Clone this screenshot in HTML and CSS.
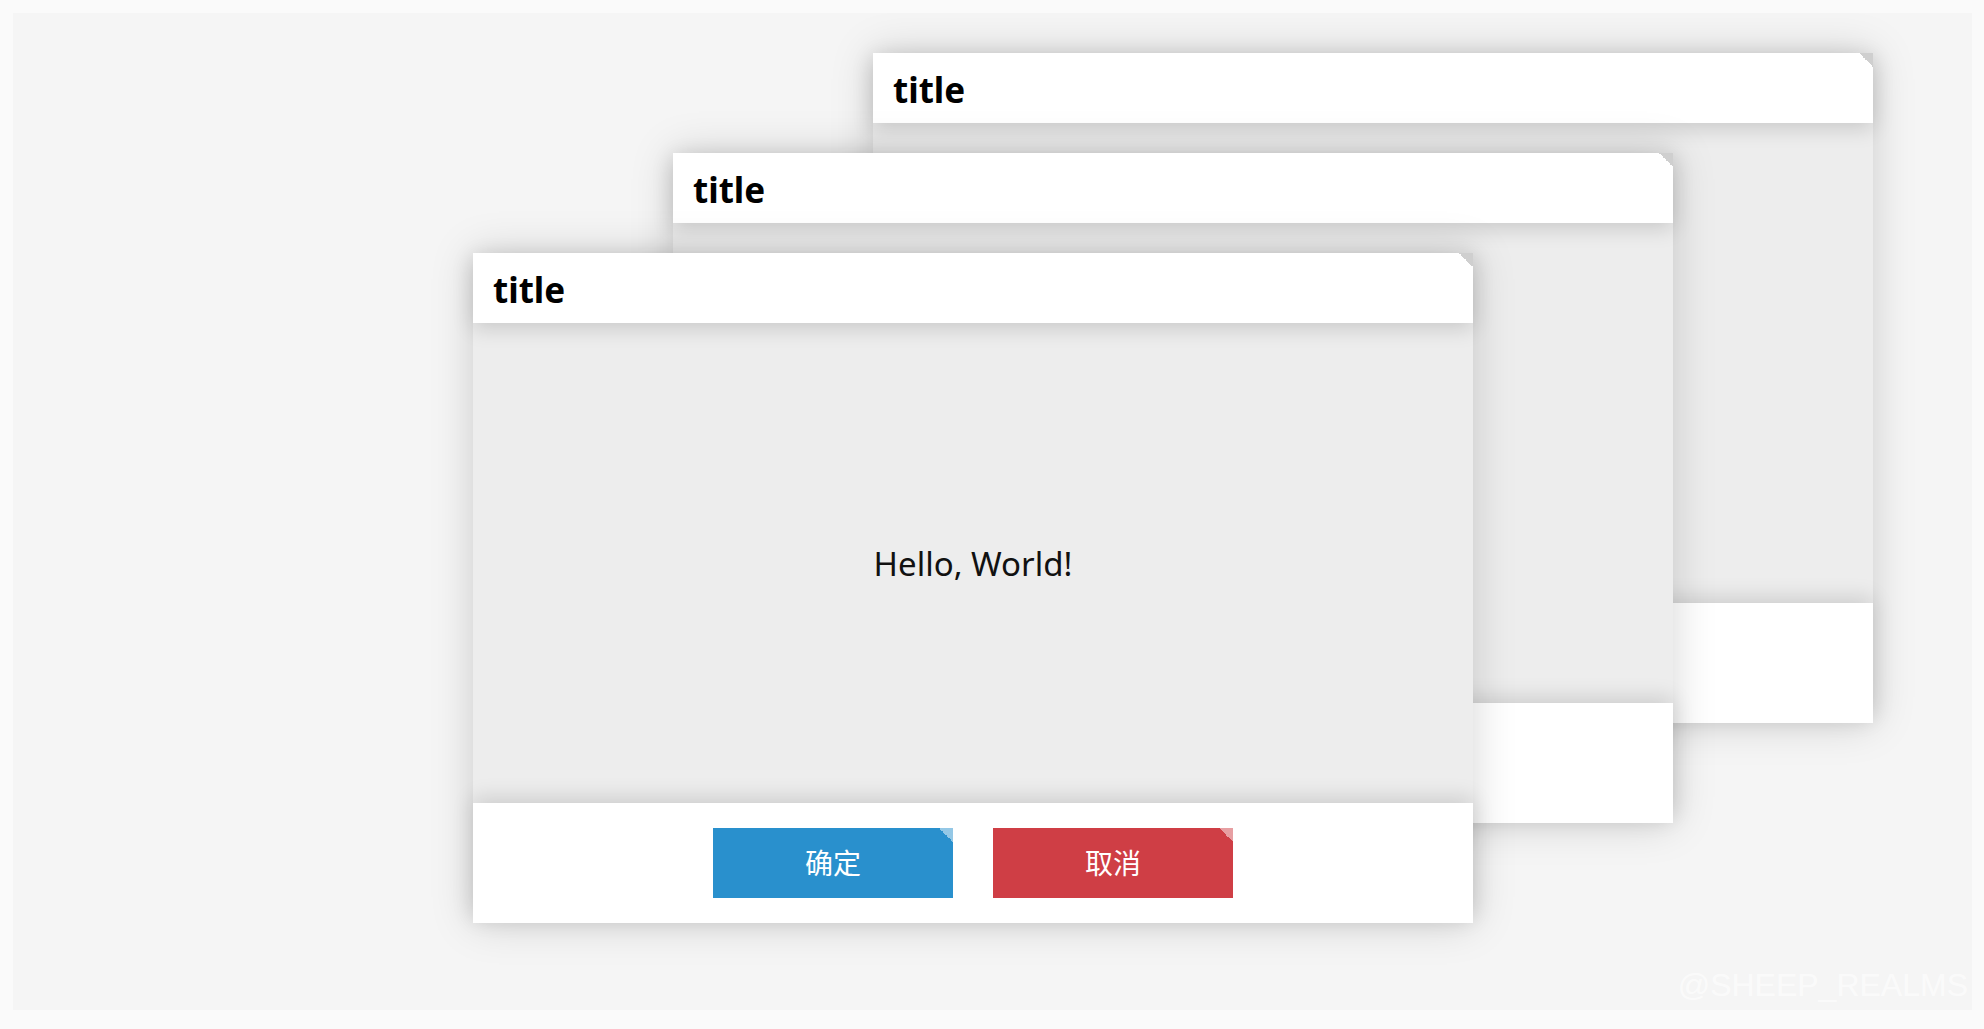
FILE: index.html
```html
<!DOCTYPE html>
<html lang="zh">
<head>
<meta charset="utf-8">
<title>Dialogs</title>
<link rel="stylesheet" href="styles.css">
</head>
<body>
<div class="panel">
  <div class="dialog dialog-back">
    <div class="dialog-header"><span class="dialog-title">title</span></div>
    <div class="dialog-body"></div>
    <div class="dialog-footer"></div>
  </div>
  <div class="dialog dialog-mid">
    <div class="dialog-header"><span class="dialog-title">title</span></div>
    <div class="dialog-body"></div>
    <div class="dialog-footer"></div>
  </div>
  <div class="dialog dialog-front">
    <div class="dialog-header"><span class="dialog-title">title</span></div>
    <div class="dialog-body"><p class="dialog-text">Hello, World!</p></div>
    <div class="dialog-footer">
      <button class="btn btn-ok">确定</button>
      <button class="btn btn-cancel">取消</button>
    </div>
  </div>
  <div class="watermark">@SHEEP_REALMS</div>
</div>
</body>
</html>
```
FILE: styles.css
```css
html, body {
  margin: 0;
  padding: 0;
}
body {
  background: #fafafa;
  width: 1984px;
  height: 1029px;
  overflow: hidden;
  font-family: "Noto Sans", "Noto Sans CJK SC", sans-serif;
}
.panel {
  position: relative;
  margin: 13px;
  width: 1959px;
  height: 997px;
  background: #f5f5f5;
  overflow: hidden;
}
.dialog {
  position: absolute;
  width: 1000px;
  height: 670px;
  display: flex;
  flex-direction: column;
  background: #ededed;
  box-shadow: 0 0 40px rgba(0, 0, 0, 0.17);
  isolation: isolate;
}
.dialog-back { left: 860px; top: 40px; z-index: 1; }
.dialog-mid { left: 660px; top: 140px; z-index: 2; }
.dialog-front { left: 460px; top: 240px; z-index: 3; }

.dialog-header {
  position: relative;
  z-index: 2;
  height: 70px;
  box-sizing: border-box;
  flex: none;
  background: #fff;
  display: flex;
  align-items: center;
  padding: 2px 0 0 20px;
  box-shadow: 0 5px 20px rgba(0, 0, 0, 0.16);
}
.dialog-header::after {
  content: "";
  position: absolute;
  top: 0;
  right: 0;
  width: 14px;
  height: 14px;
  background: linear-gradient(to bottom left, #cfcfcf 50%, transparent 50%);
}
.dialog-title {
  font-family: "Noto Sans", "Noto Sans CJK SC", sans-serif;
  font-weight: 700;
  font-size: 35px;
  color: #000;
  line-height: 1;
}
.dialog-body {
  position: relative;
  z-index: 1;
  flex: 1;
  background: #ededed;
  display: flex;
  align-items: center;
  justify-content: center;
}
.dialog-text {
  margin: 0;
  font-size: 33px;
  color: #111;
}
.dialog-footer {
  position: relative;
  z-index: 2;
  height: 120px;
  flex: none;
  background: #fff;
  display: flex;
  align-items: center;
  justify-content: center;
  gap: 40px;
  box-shadow: 0 -5px 20px rgba(0, 0, 0, 0.14);
}
.btn {
  position: relative;
  width: 240px;
  height: 70px;
  border: 0;
  padding: 0 0 3px;
  color: #fff;
  font-family: "Noto Sans CJK SC", sans-serif;
  font-size: 28px;
  cursor: pointer;
}
.btn::after {
  content: "";
  position: absolute;
  top: 0;
  right: 0;
  width: 14px;
  height: 14px;
  background: linear-gradient(to bottom left, rgba(255, 255, 255, 0.5) 50%, transparent 50%);
}
.btn-ok { background: #2990cd; }
.btn-cancel { background: #cf3e45; }

.watermark {
  position: absolute;
  right: 4px;
  bottom: 6px;
  font-family: "Liberation Sans", Arial, sans-serif;
  font-size: 32px;
  color: rgba(255, 255, 255, 0.6);
}
```
